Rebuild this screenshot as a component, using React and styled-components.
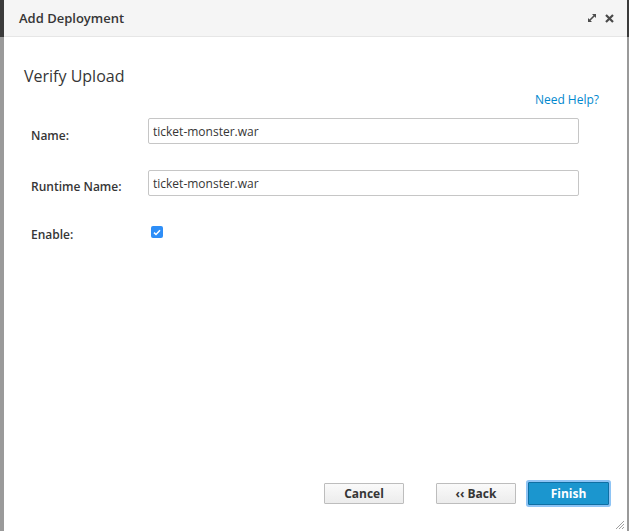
import styled, { createGlobalStyle } from "styled-components";

const Global = createGlobalStyle`
  html, body {
    margin: 0;
    height: 100%;
    overflow: hidden;
  }
  body {
    background: linear-gradient(#3b3b3b 0, #3b3b3b 37px, #9a9a9a 37px);
    font-family: "Open Sans", "Noto Sans", sans-serif;
  }
`;

const Backdrop = styled.div`
  display: flex;
  height: 531px;
  padding: 0 2px 0 4px;
`;

const Modal = styled.div`
  flex: 1;
  display: flex;
  flex-direction: column;
  background: #fff;
  position: relative;
`;

const Header = styled.div`
  height: 37px;
  box-sizing: border-box;
  display: flex;
  align-items: center;
  padding: 0 13px 0 15px;
  background: #f5f5f5;
  border-bottom: 1px solid #e6e6e6;
`;

const Title = styled.div`
  flex: 1;
  font-size: 13px;
  font-weight: 600;
  color: #363636;
`;

const Tools = styled.div`
  display: flex;
  align-items: center;
  gap: 8px;
`;

const Body = styled.div`
  flex: 1;
  padding: 28px 48px 0 20px;
`;

const Heading = styled.h2`
  margin: 0;
  font-size: 16px;
  font-weight: 400;
  color: #363636;
  line-height: 22px;
`;

const HelpRow = styled.div`
  display: flex;
  justify-content: flex-end;
  margin: 5px -20px 0 0;
`;

const HelpLink = styled.a`
  font-size: 12px;
  color: #0088ce;
  text-decoration: none;
  line-height: 16px;
`;

const Form = styled.div`
  display: flex;
  flex-direction: column;
  gap: 26px;
  margin-top: 10px;
`;

const Row = styled.div`
  display: grid;
  grid-template-columns: 117px 1fr;
  align-items: start;
  padding-left: 7px;
  margin-top: ${(p) => p.$shift || 0}px;
`;

const Label = styled.label`
  font-size: 12px;
  line-height: 17px;
  font-weight: 600;
  color: #363636;
  padding-top: ${(p) => p.$offset || 0}px;
`;

const Input = styled.input`
  height: 26px;
  box-sizing: border-box;
  border: 1px solid #c6c6c6;
  border-radius: 2px;
  padding: 0 4px;
  font-family: "Open Sans", "Noto Sans", sans-serif;
  font-size: 12px;
  color: #363636;
  outline: none;
`;

const Check = styled.span`
  width: 12px;
  height: 12px;
  margin-left: 3px;
  border-radius: 2px;
  background: #2e8ef7;
  display: flex;
  align-items: center;
  justify-content: center;
`;

const Footer = styled.div`
  display: flex;
  justify-content: flex-end;
  align-items: center;
  padding: 0 18px 26px 0;
`;

const Button = styled.button`
  width: ${(p) => (p.$primary ? 81 : 80)}px;
  height: ${(p) => (p.$primary ? 23 : 21)}px;
  margin-left: ${(p) => p.$gap}px;
  box-sizing: border-box;
  font-family: "Open Sans", "Noto Sans", sans-serif;
  font-size: 12px;
  font-weight: 700;
  border-radius: 1px;
  padding: 0;
  cursor: pointer;
  color: ${(p) => (p.$primary ? "#fff" : "#363636")};
  background: ${(p) =>
    p.$primary ? "#1b96cf" : "linear-gradient(#fafafa, #ececec)"};
  border: 1px solid ${(p) => (p.$primary ? "#0f6fa3" : "#bdbdbd")};
  box-shadow: ${(p) => (p.$primary ? "0 0 0 2px #8ec4f5" : "none")};
`;

const Grip = styled.svg`
  position: absolute;
  right: 2px;
  bottom: 1px;
`;

function ExpandIcon() {
  return (
    <svg width="10" height="10" viewBox="0 0 10 10">
      <path d="M2.5 7.5 L7.5 2.5" stroke="#4d4d4d" strokeWidth="1.6" />
      <path d="M5 1 H9 V5 Z" fill="#4d4d4d" />
      <path d="M1 5 V9 H5 Z" fill="#4d4d4d" />
    </svg>
  );
}

function CloseIcon() {
  return (
    <svg width="9" height="9" viewBox="0 0 9 9">
      <path d="M1 1 L8 8 M8 1 L1 8" stroke="#4a4a4a" strokeWidth="2.2" />
    </svg>
  );
}

export default function App() {
  return (
    <>
      <Global />
      <Backdrop>
        <Modal>
          <Header>
            <Title>Add Deployment</Title>
            <Tools>
              <ExpandIcon />
              <CloseIcon />
            </Tools>
          </Header>
          <Body>
            <Heading>Verify Upload</Heading>
            <HelpRow>
              <HelpLink href="#">Need Help?</HelpLink>
            </HelpRow>
            <Form>
              <Row>
                <Label $offset={9}>Name:</Label>
                <Input defaultValue="ticket-monster.war" />
              </Row>
              <Row>
                <Label $offset={8}>Runtime Name:</Label>
                <Input defaultValue="ticket-monster.war" />
              </Row>
              <Row $shift={4}>
                <Label $offset={0}>Enable:</Label>
                <Check>
                  <svg width="8" height="7" viewBox="0 0 8 7">
                    <path
                      d="M1 3.6 L3 5.5 L7 1.2"
                      fill="none"
                      stroke="#fff"
                      strokeWidth="1.5"
                    />
                  </svg>
                </Check>
              </Row>
            </Form>
          </Body>
          <Footer>
            <Button $gap={0}>Cancel</Button>
            <Button $gap={32}>‹‹ Back</Button>
            <Button $gap={12} $primary>
              Finish
            </Button>
          </Footer>
          <Grip width="10" height="10" viewBox="0 0 10 10">
            <path
              d="M1 9 L9 1 M4 9 L9 4 M7 9 L9 7"
              stroke="#888"
              strokeWidth="0.8"
            />
          </Grip>
        </Modal>
      </Backdrop>
    </>
  );
}
